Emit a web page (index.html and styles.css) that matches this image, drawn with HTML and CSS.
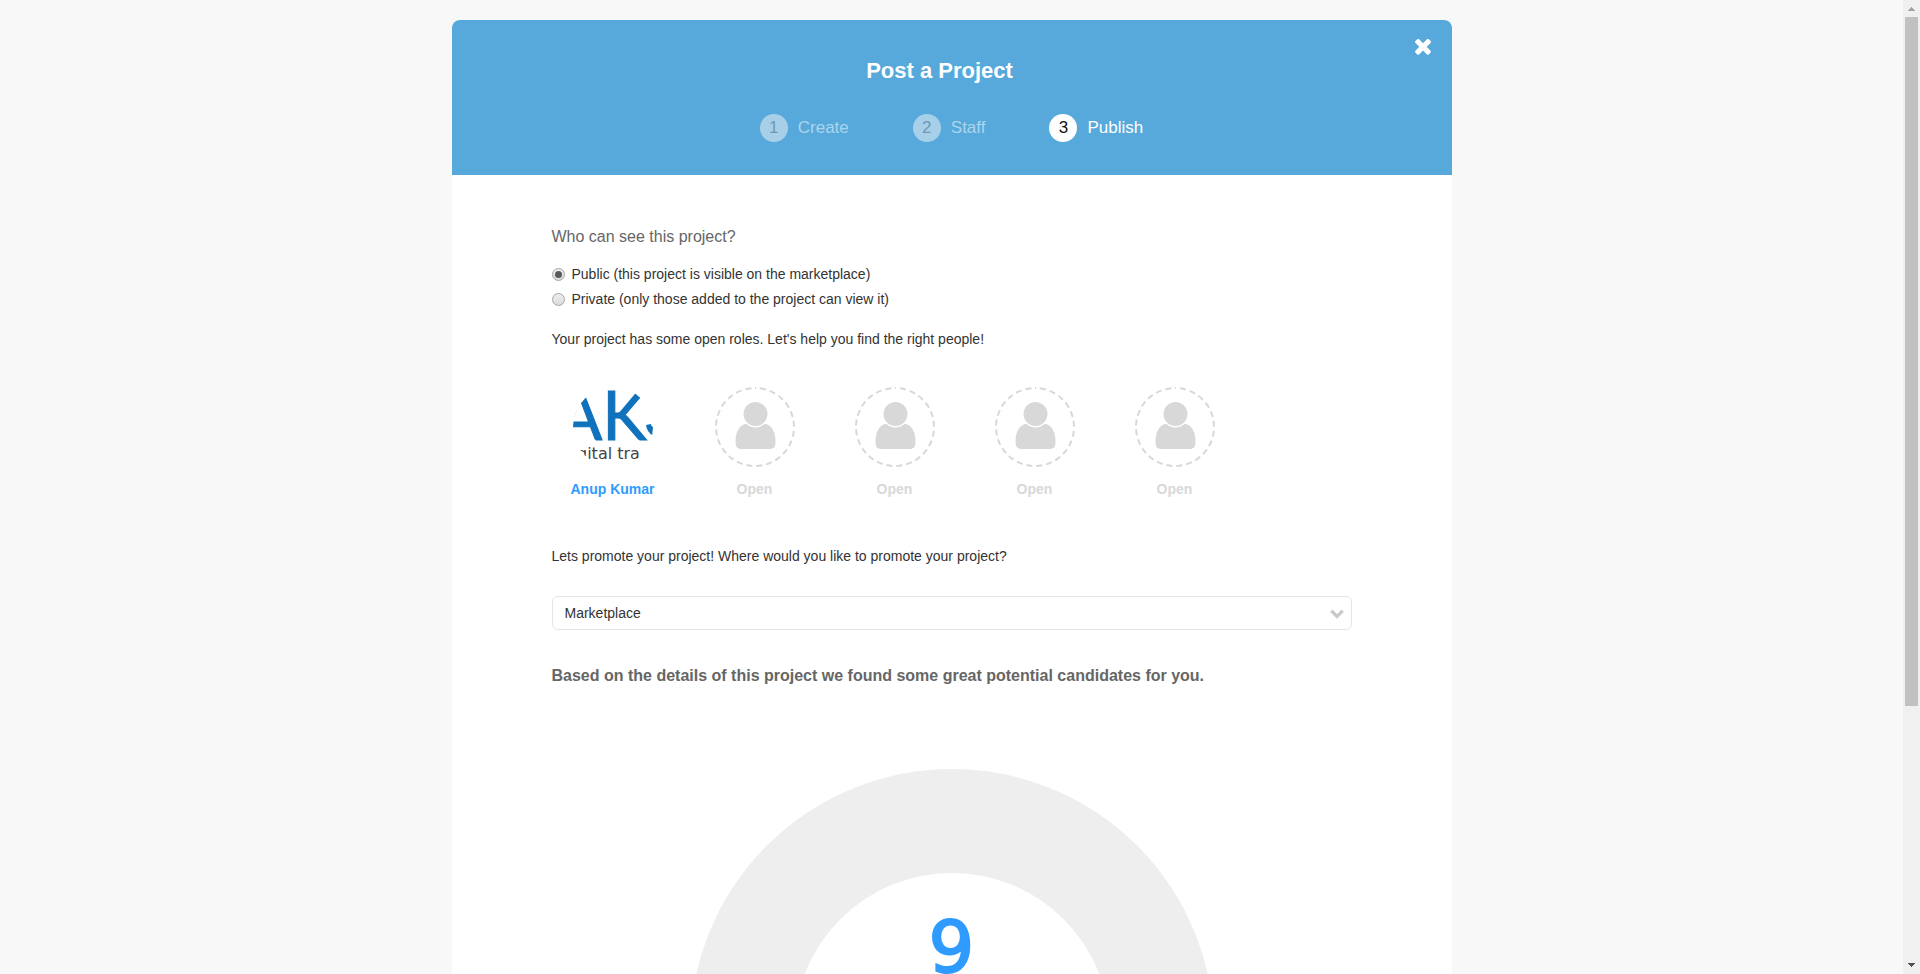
FILE: index.html
```html
<!DOCTYPE html>
<html lang="en">
<head>
<meta charset="utf-8">
<title>Post a Project</title>
<link rel="stylesheet" href="styles.css">
</head>
<body>
<svg width="0" height="0" class="sprite" aria-hidden="true">
  <symbol id="person" viewBox="0 0 80 80">
    <circle cx="40" cy="40" r="39" fill="none" stroke="#d8d8d8" stroke-width="2" stroke-dasharray="6 4" stroke-dashoffset="5" transform="rotate(-90 40 40)"/>
    <path d="M30 37h21c7 2 9.500 10 9.500 18 0 5-2 7-6 7h-28c-4 0-6-2-6-7 0-8 2.500-16 9.500-18z" fill="#d8d8d8"/>
    <circle cx="40.500" cy="27" r="12.700" fill="#d8d8d8" stroke="#fff" stroke-width="1.500"/>
  </symbol>
</svg>
<div class="viewport">
  <main class="page">
    <section class="modal">
      <header class="modal-header">
        <h1 class="modal-title">Post a Project</h1>
        <button class="close" type="button" aria-label="Close">
          <svg width="24" height="24" viewBox="0 0 1792 1792" fill="#fff"><path d="M1490 1322q0 40-28 68l-136 136q-28 28-68 28t-68-28l-294-294-294 294q-28 28-68 28t-68-28l-136-136q-28-28-28-68t28-68l294-294-294-294q-28-28-28-68t28-68l136-136q28-28 68-28t68 28l294 294 294-294q28-28 68-28t68 28l136 136q28 28 28 68t-28 68l-294 294 294 294q28 28 28 68z"/></svg>
        </button>
        <ol class="steps">
          <li class="step"><span class="step-number">1</span>Create</li>
          <li class="step"><span class="step-number">2</span>Staff</li>
          <li class="step current"><span class="step-number">3</span>Publish</li>
        </ol>
      </header>
      <form class="modal-body">
        <h2 class="question" id="visibility">Who can see this project?</h2>
        <div class="options" role="radiogroup" aria-labelledby="visibility">
          <label class="option"><input class="radio" type="radio" name="visibility" checked>Public (this project is visible on the marketplace)</label>
          <label class="option"><input class="radio" type="radio" name="visibility">Private (only those added to the project can view it)</label>
        </div>
        <p class="text">Your project has some open roles. Let's help you find the right people!</p>
        <ul class="team">
          <li class="member">
            <svg class="avatar" viewBox="0 0 80 80" aria-hidden="true">
              <clipPath id="round"><circle cx="40" cy="40" r="40"/></clipPath>
              <g clip-path="url(#round)">
                <text class="logo-mark" x="-16" y="53">AK</text>
                <path d="M73 38q1 8 8 11v-9q-3 0-3-3z" fill="#1072bc"/>
                <path d="M1 30Q3 19 9 12M74 17q4 5 5 11" fill="none" stroke="#1072bc" stroke-opacity=".4"/>
                <text class="logo-line" x="4" y="72">gital tra</text>
              </g>
            </svg>
            <a class="member-name" href="#">Anup Kumar</a>
          </li>
          <li class="member"><svg class="avatar"><use href="#person"/></svg><span class="member-name open">Open</span></li>
          <li class="member"><svg class="avatar"><use href="#person"/></svg><span class="member-name open">Open</span></li>
          <li class="member"><svg class="avatar"><use href="#person"/></svg><span class="member-name open">Open</span></li>
          <li class="member"><svg class="avatar"><use href="#person"/></svg><span class="member-name open">Open</span></li>
        </ul>
        <label class="text" for="promote">Lets promote your project! Where would you like to promote your project?</label>
        <div class="select-box">
          <select class="select" id="promote"><option>Marketplace</option></select>
          <svg class="chevron" width="14" height="14" viewBox="0 0 1792 1792" fill="#c8c8c8" stroke="#c8c8c8" stroke-width="90"><path d="M1683 808l-742 741q-19 19-45 19t-45-19l-742-741q-19-19-19-45.500t19-45.500l166-165q19-19 45-19t45 19l531 531 531-531q19-19 45-19t45 19l166 165q19 19 19 45.500t-19 45.500z"/></svg>
        </div>
        <h2 class="result-title">Based on the details of this project we found some great potential candidates for you.</h2>
        <div class="ring"><output class="count">9</output></div>
      </form>
    </section>
  </main>
  <div class="scrollbar" aria-hidden="true">
    <svg class="arrow" width="7" height="4" viewBox="0 0 7 4" fill="#a3a3a3" shape-rendering="crispEdges"><path d="M3 0h1v1h1v1h1v1h1v1H0V3h1V2h1V1h1z"/></svg>
    <div class="track"><div class="thumb"></div></div>
    <svg class="arrow" width="7" height="4" viewBox="0 0 7 4" fill="#505050" shape-rendering="crispEdges"><path d="M0 0h7v1H6v1H5v1H4v1H3V3H2V2H1V1H0z"/></svg>
  </div>
</div>
</body>
</html>
```
FILE: styles.css
```css
* {
  box-sizing: border-box;
}

body {
  margin: 0;
  background: #f8f8f8;
  color: #333;
  font: 14px/20px "Liberation Sans", Arial, sans-serif;
}

h1, h2, p, ol, ul {
  margin: 0;
  padding: 0;
  list-style: none;
}

.sprite {
  position: absolute;
}

.viewport {
  display: flex;
  height: 100vh;
  overflow: hidden;
}

.page {
  flex: 1;
  min-width: 0;
  padding-top: 20px;
  overflow: hidden;
}

.modal {
  max-width: 1000px;
  margin: 0 auto;
  background: #fff;
  border-radius: 8px;
}

.modal-header {
  position: relative;
  padding: 37px 0 33px;
  background: #56a9da;
  border-radius: 8px 8px 0 0;
  color: #fff;
}

.modal-title {
  padding-right: 24px;
  font-size: 22px;
  line-height: 28px;
  text-align: center;
}

.close {
  position: absolute;
  top: 14px;
  right: 17px;
  display: flex;
  padding: 0;
  border: 0;
  background: none;
}

.steps {
  display: flex;
  justify-content: center;
  gap: 64px;
  margin-top: 29px;
  font-size: 17px;
  line-height: 28px;
}

.step {
  display: flex;
  gap: 10px;
  opacity: 0.5;
}

.step.current {
  opacity: 1;
}

.step-number {
  width: 28px;
  height: 28px;
  border-radius: 50%;
  background: #f7f7f7;
  color: #888;
  text-align: center;
}

.current .step-number {
  background: #fff;
  color: #111;
}

.modal-body {
  display: flex;
  flex-direction: column;
  padding: 52px 100px 40px;
}

.question {
  color: #666;
  font-size: 16px;
  font-weight: normal;
  line-height: 20px;
}

.options {
  display: flex;
  flex-direction: column;
  gap: 5px;
  margin: 17px 0 20px;
}

.option {
  display: flex;
  align-items: center;
  gap: 7px;
}

.radio {
  display: grid;
  place-content: center;
  width: 13px;
  height: 13px;
  margin: 0;
  border: 1px solid #a5a5a5;
  border-radius: 50%;
  background: linear-gradient(#efefef, #dadada);
  appearance: none;
}

.radio:checked::before {
  width: 7px;
  height: 7px;
  border-radius: 50%;
  background: #5a5a5a;
  content: "";
}

.team {
  display: flex;
  gap: 60px;
  margin: 38px 0 47px;
  padding-left: 19px;
}

.member {
  display: flex;
  flex-direction: column;
  align-items: center;
  gap: 12px;
}

.avatar {
  display: block;
  width: 80px;
  height: 80px;
}

.logo-mark {
  fill: #1072bc;
  stroke: #1072bc;
  font: 67px Lato, sans-serif;
}

.logo-line {
  fill: #444;
  font: 16px "DejaVu Sans", sans-serif;
}

.member-name {
  color: #2f9bff;
  font-weight: bold;
  text-decoration: none;
}

.member-name.open {
  color: #d8d8d8;
}

.select-box {
  position: relative;
  margin: 30px 0 36px;
}

.select {
  display: block;
  width: 100%;
  height: 34px;
  padding: 0 12px;
  border: 1px solid #e5e5e5;
  border-radius: 6px;
  background: #fff;
  color: #333;
  font: inherit;
  appearance: none;
}

.chevron {
  position: absolute;
  top: 10px;
  right: 8px;
  pointer-events: none;
}

.result-title {
  color: #666;
  font-size: 16px;
  line-height: 20px;
}

.ring {
  display: flex;
  justify-content: center;
  align-self: center;
  width: 524px;
  height: 524px;
  margin-top: 83px;
  padding-top: 36px;
  border: 104px solid #eee;
  border-radius: 50%;
}

.count {
  color: #2f9bff;
  font: 72px/76px "DejaVu Sans", sans-serif;
  -webkit-text-stroke: 2px #2f9bff;
}

.scrollbar {
  display: flex;
  flex-direction: column;
  align-items: center;
  width: 17px;
  padding: 7px 2px;
  background: #f0f0f0;
}

.track {
  flex: 1;
  width: 100%;
  margin: 6px 0;
}

.thumb {
  height: 73.3%;
  background: #c1c1c1;
}
```
